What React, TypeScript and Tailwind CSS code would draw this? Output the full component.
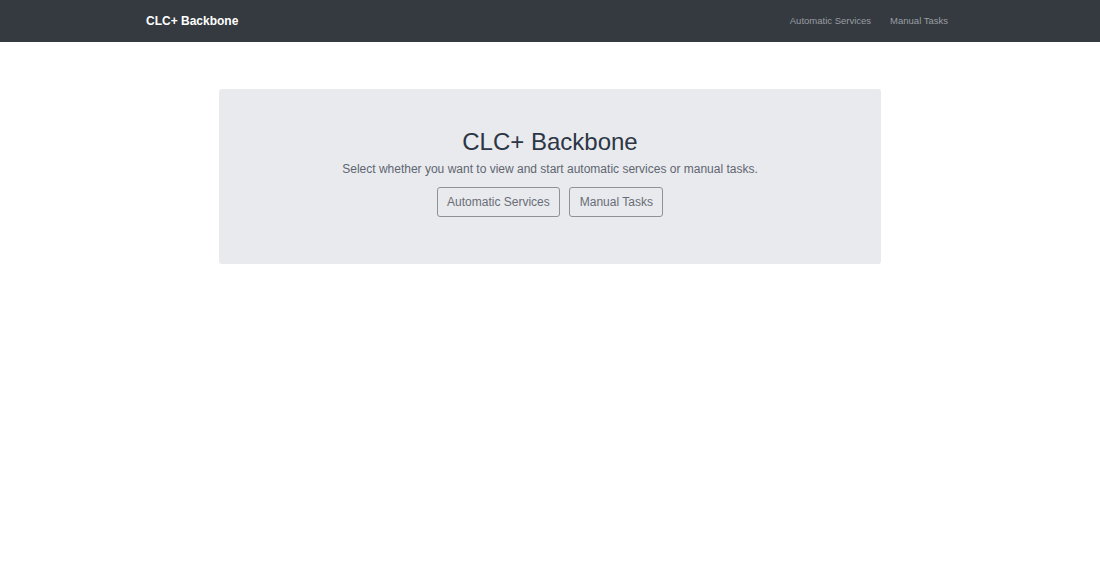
import React from 'react';

const App = () => {
  return (
    <div className="min-h-screen bg-white" style={{ fontFamily: '"Liberation Sans", Arial, sans-serif' }}>
      <nav className="h-[42px] bg-[#343a40]">
        <div className="ml-[146px] flex h-full w-[802px] items-center justify-between">
          <a className="text-[12px] font-bold text-white">CLC+ Backbone</a>
          <div className="flex items-center gap-[19px] text-[9.5px] text-[#9a9da0]">
            <a>Automatic Services</a>
            <a>Manual Tasks</a>
          </div>
        </div>
      </nav>

      <main className="pt-[47px]">
        <div className="mx-auto flex h-[175px] w-[662px] flex-col items-center rounded-[3px] bg-[#e9eaee] pt-[38px]">
          <h1 className="text-[24px] leading-[29px] text-[#2c3645]">CLC+ Backbone</h1>
          <p className="mt-[5px] text-[12px] leading-[16px] text-[#5f6670]">
            Select whether you want to view and start automatic services or manual tasks.
          </p>
          <div className="mt-[10px] flex gap-[9px]">
            <button className="h-[30px] rounded-[3px] border border-[#8e9196] px-[9.5px] text-[12px] text-[#686d75]">
              Automatic Services
            </button>
            <button className="h-[30px] rounded-[3px] border border-[#8e9196] px-[9.5px] text-[12px] text-[#686d75]">
              Manual Tasks
            </button>
          </div>
        </div>
      </main>
    </div>
  );
};

export default App;
